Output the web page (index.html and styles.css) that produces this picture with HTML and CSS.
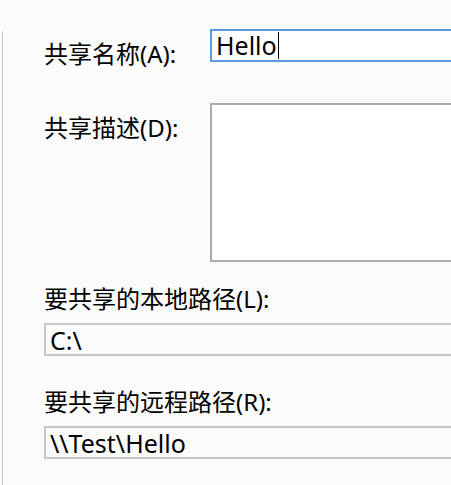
FILE: index.html
```html
<!DOCTYPE html>
<html lang="zh-CN">
<head>
<meta charset="utf-8">
<title>共享</title>
<link rel="stylesheet" href="styles.css">
</head>
<body>
<div class="page">
  <div class="rule"></div>
  <form class="form">
    <div class="row">
      <label class="label label-inline">共享名称(A):</label>
      <div class="field field-focus"><span class="value">Hello</span><span class="caret"></span></div>
    </div>
    <div class="row row-desc">
      <label class="label label-inline">共享描述(D):</label>
      <textarea class="field field-area"></textarea>
    </div>
    <div class="stack stack-first">
      <label class="label">要共享的本地路径(L):</label>
      <input class="field field-readonly" type="text" readonly value="C:\">
    </div>
    <div class="stack">
      <label class="label">要共享的远程路径(R):</label>
      <input class="field field-readonly" type="text" readonly value="\\Test\Hello">
    </div>
  </form>
</div>
</body>
</html>
```

FILE: styles.css
```css
html, body {
  margin: 0;
  padding: 0;
  background: #fbfbfb;
  overflow: hidden;
  height: 100%;
}

body {
  font-family: "Noto Sans", "Noto Sans CJK SC", sans-serif;
  font-size: 24px;
  color: #000;
}

.page {
  display: flex;
  height: 100%;
}

.rule {
  flex: 0 0 1px;
  margin-left: 2px;
  margin-top: 31px;
  background: #c8c8c8;
}

.form {
  flex: 1 1 auto;
  padding: 29px 0 0 41px;
  margin: 0;
  min-width: 0;
}

.row {
  display: flex;
  align-items: flex-start;
}

.row-desc {
  margin-top: 33px;
}

.label {
  display: block;
  line-height: 33px;
  white-space: nowrap;
}

.label-inline {
  flex: 0 0 166px;
  margin-top: 8px;
}

.field {
  box-sizing: border-box;
  font-family: inherit;
  font-size: 25px;
  color: #000;
  margin: 0;
  outline: none;
  flex: 0 0 auto;
}

.field-focus {
  width: 320px;
  height: 33px;
  border: 2px solid #5a9ce2;
  background: #fff;
  padding: 0 4px;
  display: flex;
  align-items: center;
  line-height: 29px;
}

.caret {
  display: inline-block;
  width: 1px;
  height: 27px;
  background: #000;
  margin-left: 1px;
}

.field-area {
  width: 320px;
  height: 159px;
  border: 2px solid #ababab;
  background: #fff;
  resize: none;
  padding: 0;
}

.stack {
  margin-top: 29px;
}

.stack-first {
  margin-top: 20px;
}

.stack .label {
  margin-bottom: 8px;
}

.field-readonly {
  display: block;
  width: 480px;
  height: 33px;
  border: 2px solid #c8c8c8;
  background: #fbfbfb;
  padding: 0 4px;
  line-height: 29px;
}
```
